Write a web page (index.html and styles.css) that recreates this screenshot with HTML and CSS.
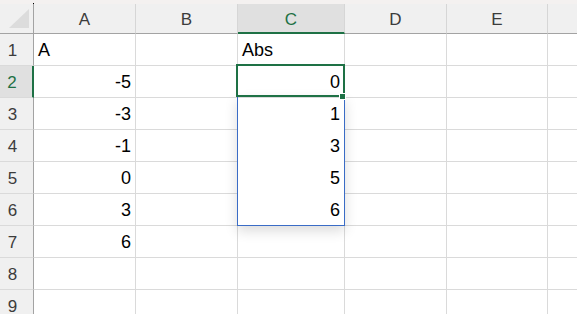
FILE: index.html
```html
<!DOCTYPE html>
<html lang="en">
<head>
  <meta charset="UTF-8" />
  <title>Sheet</title>
  <link rel="stylesheet" href="styles.css">
</head>
<body>
  <div class="topbar"><span class="dot"></span></div>
  <div class="grid">
    <div class="corner">
      <svg width="22" height="20" viewBox="0 0 22 20"><polygon points="21,0 21,19 1,19" fill="#dcdcdc"/></svg>
    </div>
    <div class="colhead">A</div>
    <div class="colhead">B</div>
    <div class="colhead active">C</div>
    <div class="colhead">D</div>
    <div class="colhead">E</div>
    <div class="colhead last"></div>

    <div class="rowhead">1</div>
    <div class="cell">A</div><div class="cell"></div><div class="cell">Abs</div><div class="cell"></div><div class="cell"></div><div class="cell last"></div>

    <div class="rowhead active">2</div>
    <div class="cell num">-5</div><div class="cell"></div><div class="cell num">0</div><div class="cell"></div><div class="cell"></div><div class="cell last"></div>

    <div class="rowhead">3</div>
    <div class="cell num">-3</div><div class="cell"></div><div class="cell num inside">1</div><div class="cell"></div><div class="cell"></div><div class="cell last"></div>

    <div class="rowhead">4</div>
    <div class="cell num">-1</div><div class="cell"></div><div class="cell num inside">3</div><div class="cell"></div><div class="cell"></div><div class="cell last"></div>

    <div class="rowhead">5</div>
    <div class="cell num">0</div><div class="cell"></div><div class="cell num inside">5</div><div class="cell"></div><div class="cell"></div><div class="cell last"></div>

    <div class="rowhead">6</div>
    <div class="cell num">3</div><div class="cell"></div><div class="cell num">6</div><div class="cell"></div><div class="cell"></div><div class="cell last"></div>

    <div class="rowhead">7</div>
    <div class="cell num">6</div><div class="cell"></div><div class="cell"></div><div class="cell"></div><div class="cell"></div><div class="cell last"></div>

    <div class="rowhead">8</div>
    <div class="cell"></div><div class="cell"></div><div class="cell"></div><div class="cell"></div><div class="cell"></div><div class="cell last"></div>

    <div class="rowhead">9</div>
    <div class="cell"></div><div class="cell"></div><div class="cell"></div><div class="cell"></div><div class="cell"></div><div class="cell last"></div>

    <div class="spill"></div>
    <div class="selection"></div>
    <div class="handle"></div>
  </div>
</body>
</html>
```

FILE: styles.css
```css
body {
  margin: 0;
  background: #fff;
  font-family: "Liberation Sans", Arial, sans-serif;
  overflow: hidden;
}
.topbar {
  height: 4px;
  background: #f4f1f0;
  position: relative;
}
.dot {
  position: absolute;
  left: 33px;
  top: 3px;
  width: 1px;
  height: 2px;
  background: #000;
}
.grid {
  position: relative;
  display: grid;
  grid-template-columns: 34px 102px 102px 107px 102px 101px 1fr;
  grid-template-rows: 30px repeat(9, 32px);
}
.corner {
  background: #f0f0f0;
  border-right: 1px solid #a3a3a3;
  border-bottom: 1px solid #a3a3a3;
  box-sizing: border-box;
  display: flex;
  align-items: flex-end;
  justify-content: flex-end;
  padding: 0 3px 4px 0;
}
.corner svg {
  display: block;
}
.colhead {
  background: #f0f0f0;
  border-right: 1px solid #d6d6d6;
  border-bottom: 1px solid #a3a3a3;
  box-sizing: border-box;
  color: #3c3c3c;
  font-size: 17px;
  text-align: center;
  line-height: 32px;
}
.colhead.active {
  background: #e0e0e0;
  color: #1e7145;
  border-bottom: 2px solid #1e7145;
}
.colhead.last {
  border-right: none;
}
.rowhead {
  background: #f0f0f0;
  border-right: 1px solid #a3a3a3;
  border-bottom: 1px solid #dadada;
  box-sizing: border-box;
  color: #3c3c3c;
  font-size: 17px;
  text-align: center;
  padding-right: 8px;
  line-height: 33px;
}
.rowhead.active {
  background: #e0e0e0;
  color: #1e7145;
  border-right: 2px solid #1e7145;
}
.cell {
  border-right: 1px solid #dadada;
  border-bottom: 1px solid #dadada;
  box-sizing: border-box;
  font-size: 18px;
  color: #000;
  line-height: 32px;
  padding: 0 4px;
  white-space: nowrap;
}
.cell.num {
  text-align: right;
}
.cell.inside {
  border-bottom-color: transparent;
}
.cell.last {
  border-right: none;
}
.selection {
  position: absolute;
  left: 236px;
  top: 60px;
  width: 109px;
  height: 33px;
  border: 2px solid #1e7145;
  box-sizing: border-box;
}
.spill {
  position: absolute;
  left: 237px;
  top: 92px;
  width: 108px;
  height: 130px;
  border: 1px solid #3a6cc6;
  box-sizing: border-box;
  box-shadow: 0 5px 12px rgba(0, 0, 0, 0.14);
}
.handle {
  position: absolute;
  left: 339px;
  top: 89px;
  width: 7px;
  height: 7px;
  background: #1e7145;
  border: 1px solid #fff;
  box-sizing: border-box;
}
```
